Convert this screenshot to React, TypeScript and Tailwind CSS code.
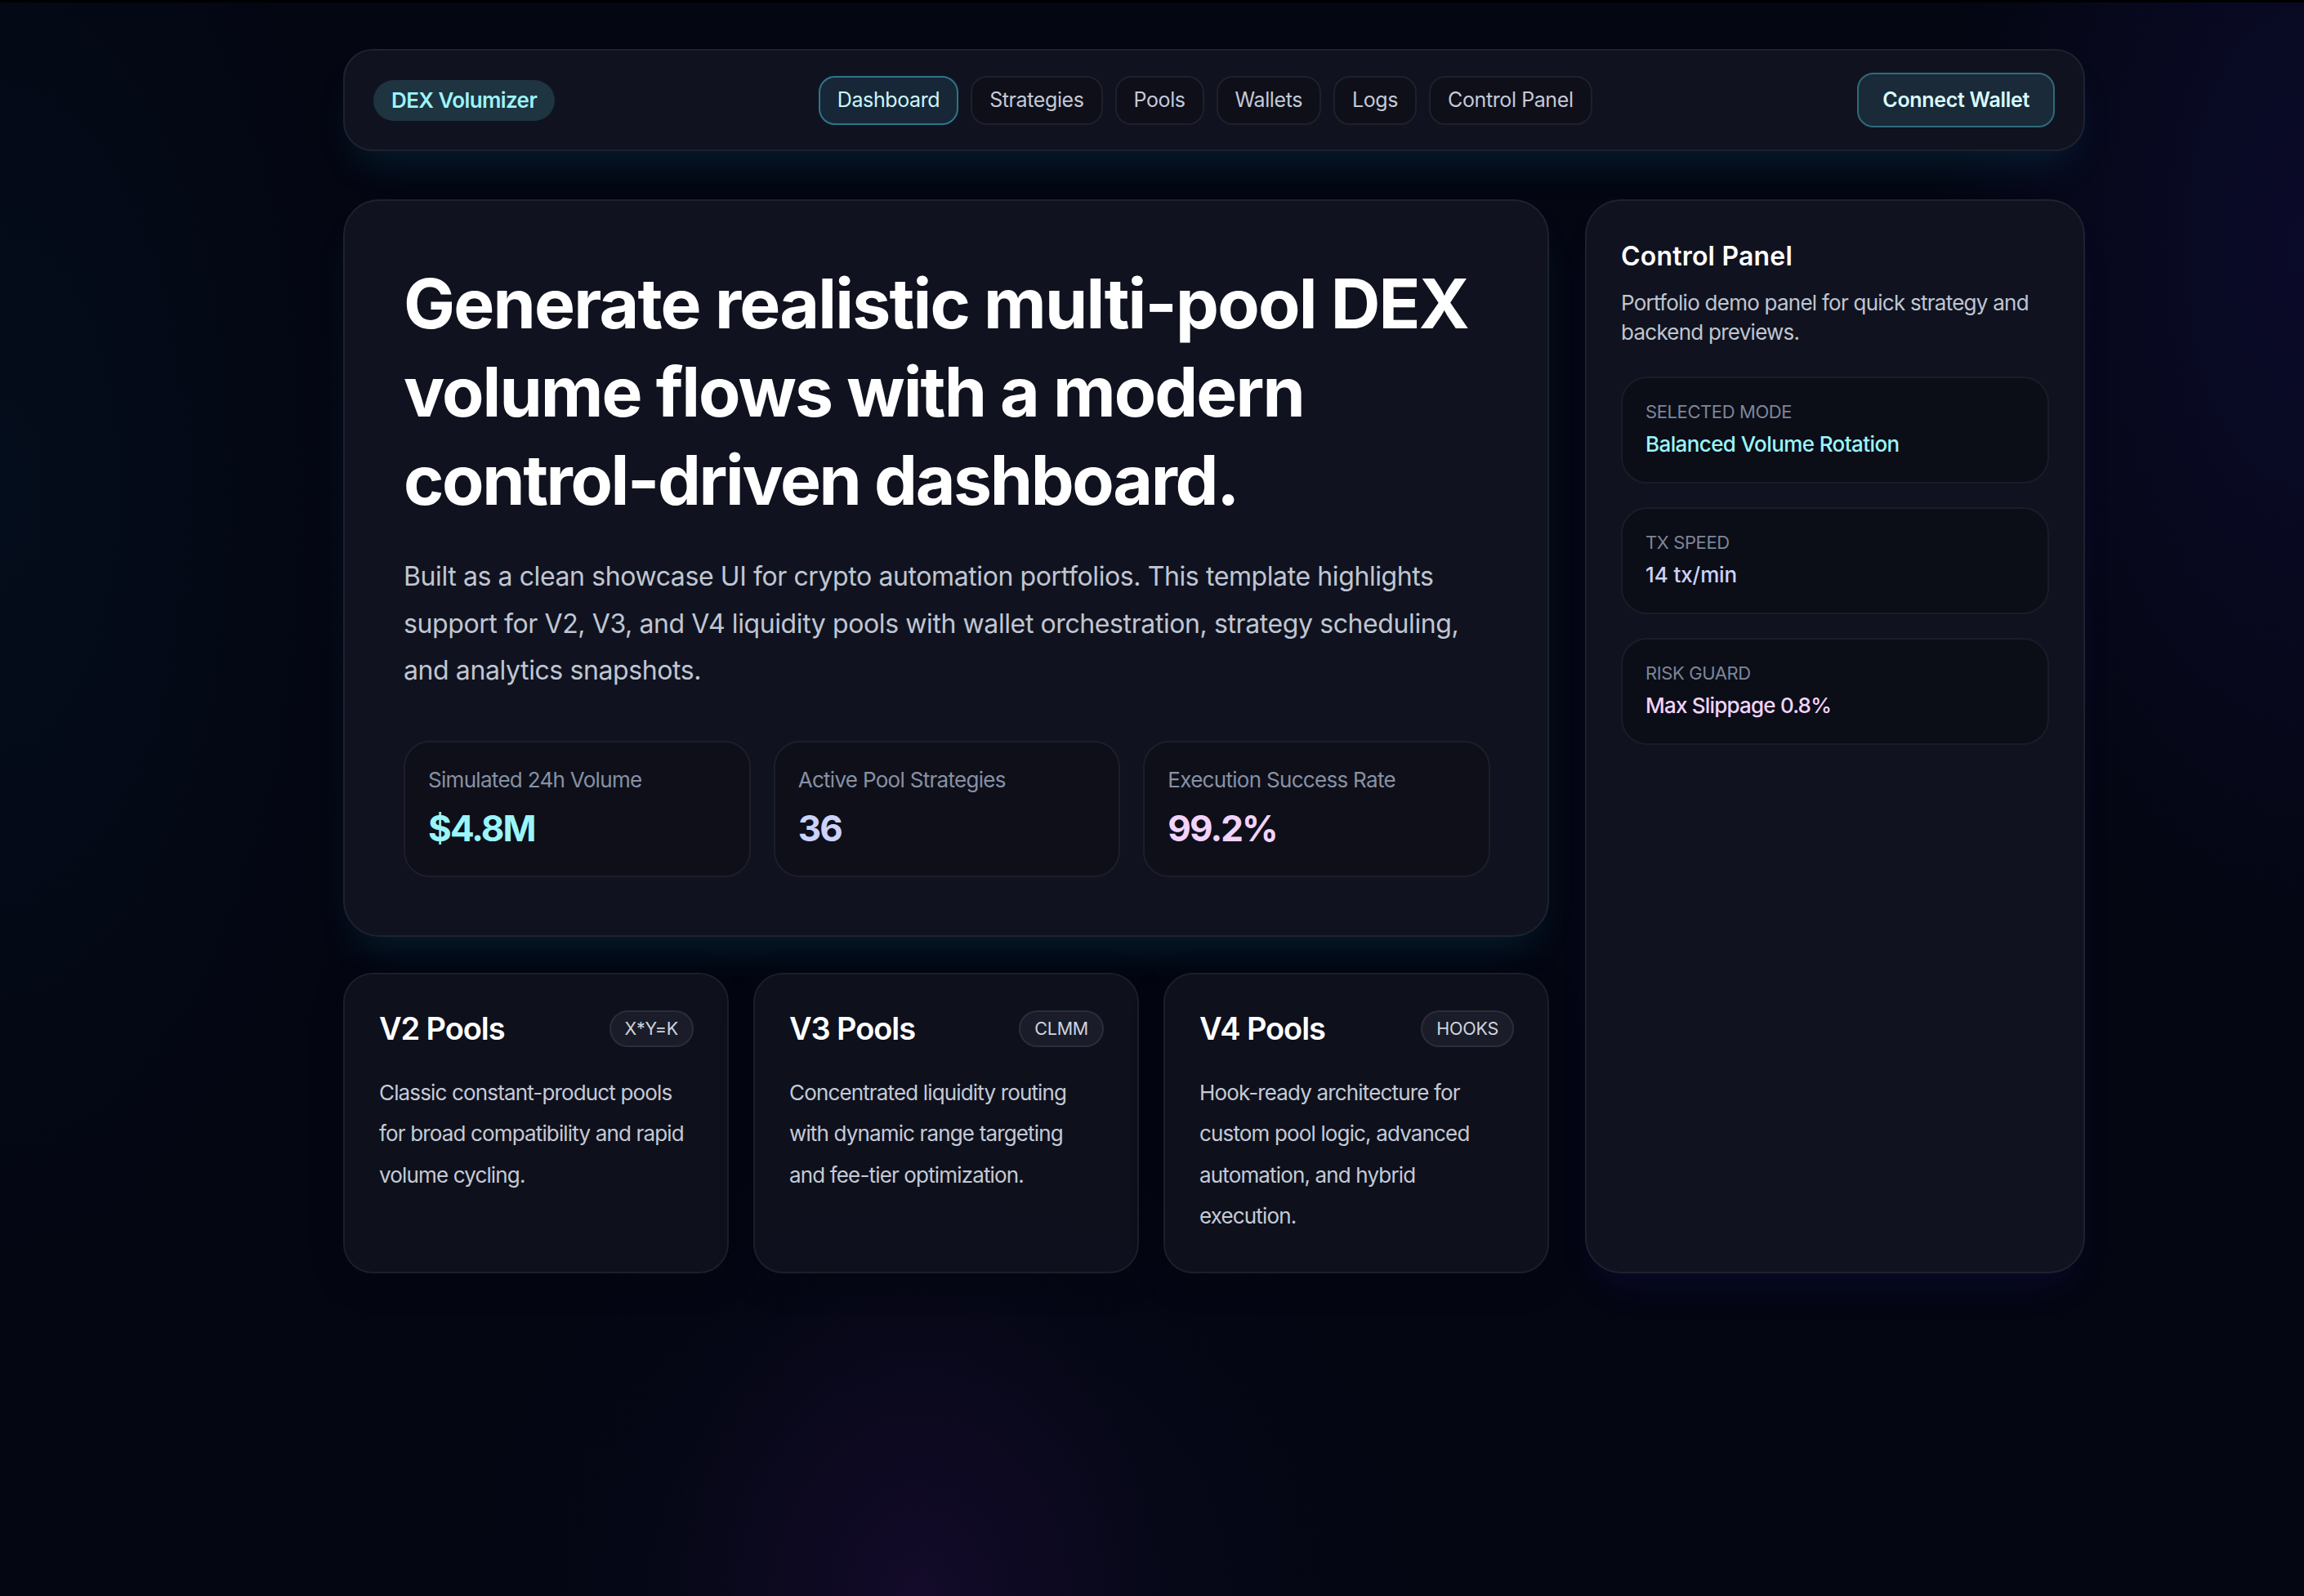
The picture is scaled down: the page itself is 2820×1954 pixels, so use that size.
import React from "react";

const navItems = ["Strategies", "Pools", "Wallets", "Logs", "Control Panel"];

function Stat({ label, value, color }: { label: string; value: string; color: string }) {
  return (
    <div className="rounded-[32px] border-2 border-[#1c1f2a] bg-[#0e0f19] px-[28px] pt-[26px] h-[167px]">
      <div className="text-[26px] leading-[40px] text-[#8791a5] tracking-[-0.7px] whitespace-nowrap">{label}</div>
      <div className={`mt-[9px] text-[44px] leading-[60px] font-bold tracking-[-1.9px] ${color}`}>{value}</div>
    </div>
  );
}

function Pool({ title, badge, lines }: { title: string; badge: string; lines: string[] }) {
  return (
    <div className="rounded-[36px] border-2 border-[#1b1f2a] bg-[#0f121e]/90 pl-[42px] pr-[41px] pt-[44px] h-[368px] shadow-[0_12px_40px_rgba(0,0,0,0.22)]">
      <div className="flex items-center justify-between h-[45px]">
        <div className="text-[38px] font-semibold text-white tracking-[-1.1px]">{title}</div>
        <div className="h-[45px] flex items-center rounded-full border-2 border-[#2b2e3a] bg-[#1a1d29] px-[17px] text-[21.5px] text-[#d0d4df] tracking-[-0.25px]">{badge}</div>
      </div>
      <div className="mt-[31px] text-[26px] leading-[50.4px] text-[#c4cad6] tracking-[-0.85px] whitespace-nowrap">
        {lines.map((l) => (
          <div key={l}>{l}</div>
        ))}
      </div>
    </div>
  );
}

function Mode({ label, value, color }: { label: string; value: string; color: string }) {
  return (
    <div className="rounded-[32px] border-2 border-[#1a1d28] bg-[#0b0d17] px-[28px] pt-[23px] h-[131px]">
      <div className="text-[22px] leading-[36px] uppercase text-[#7d8699] tracking-[-0.4px]">{label}</div>
      <div className={`mt-[2px] text-[26px] leading-[40px] font-medium ${color}`}>{value}</div>
    </div>
  );
}

export default function App() {
  return (
    <div className="h-[1954px] overflow-hidden border-t-[3px] border-black pl-[420px] pt-[57px] w-full [font-family:Inter,sans-serif] bg-[#040612] bg-[radial-gradient(ellipse_400px_560px_at_1120px_1954px,rgba(70,20,100,0.18),transparent_75%),radial-gradient(ellipse_800px_750px_at_1150px_1954px,rgba(40,30,110,0.12),transparent_75%),radial-gradient(ellipse_600px_1200px_at_2820px_300px,rgba(30,25,110,0.26),transparent_75%),radial-gradient(ellipse_600px_1300px_at_0px_600px,rgba(0,60,90,0.13),transparent_75%)]">
      <div className="w-[2132px] h-[125px] flex items-center justify-between rounded-[36px] border-2 border-[#1e2230] bg-[#10131f] pl-[35px] pr-[35px] shadow-[0_28px_50px_-18px_rgba(20,160,200,0.17)]">
        <div className="h-[50px] flex items-center rounded-full bg-[#1e3440] px-[22px] text-[26px] font-semibold text-[#9df3f8] tracking-[-0.6px]">DEX Volumizer</div>
        <nav className="flex gap-[15px] -translate-x-[1px]">
          <div className="h-[60px] flex items-center rounded-[20px] border-2 border-[#2f7488] bg-[#172737] px-[21px] pt-[1px] text-[25px] text-[#cdf6fa] tracking-[-0.4px]">Dashboard</div>
          {navItems.map((n) => (
            <div key={n} className="h-[60px] flex items-center rounded-[20px] border-2 border-[#1e212b] bg-[#0e0f19] px-[21px] pt-[1px] text-[25px] text-[#c4c9d6] tracking-[-0.4px]">{n}</div>
          ))}
        </nav>
        <div className="h-[67px] flex items-center rounded-[20px] border-2 border-[#2f6a7c] bg-[#1a2a38] px-[29px] pt-[1px] text-[25px] font-semibold text-[#d9fbfd] tracking-[-0.3px]">Connect Wallet</div>
      </div>

      <div className="mt-[59px] grid grid-cols-[1476px_612px] gap-x-[44px] w-[2132px]">
        <div className="flex flex-col gap-[44px]">
          <div className="h-[903px] rounded-[44px] border-2 border-[#1e222e] bg-[#10131f] pl-[72px] pr-[70px] pt-[72px] shadow-[0_28px_50px_-18px_rgba(20,160,200,0.16)]">
            <h1 className="text-[84px] leading-[108px] font-bold text-white">
              <span className="tracking-[-1.8px]">Generate realistic multi-pool DEX</span>
              <br />
              <span className="tracking-[-1.9px]">volume flows with a modern</span>
              <br />
              <span className="tracking-[-2.35px]">control-driven dashboard.</span>
            </h1>
            <p className="mt-[35px] text-[32px] leading-[57.6px] text-[#c0c6d3] tracking-[-0.4px]">
              Built as a clean showcase UI for crypto automation portfolios. This template highlights
              <br />
              support for V2, V3, and V4 liquidity pools with wallet orchestration, strategy scheduling,
              <br />
              and analytics snapshots.
            </p>
            <div className="mt-[57px] grid grid-cols-3 gap-[28px]">
              <Stat label="Simulated 24h Volume" value="$4.8M" color="text-[#9af5fa]" />
              <Stat label="Active Pool Strategies" value="36" color="text-[#cbd2fb]" />
              <Stat label="Execution Success Rate" value="99.2%" color="text-[#f2d3fb]" />
            </div>
          </div>
          <div className="grid grid-cols-3 gap-[30px]">
            <Pool title="V2 Pools" badge="X*Y=K" lines={["Classic constant-product pools", "for broad compatibility and rapid", "volume cycling."]} />
            <Pool title="V3 Pools" badge="CLMM" lines={["Concentrated liquidity routing", "with dynamic range targeting", "and fee-tier optimization."]} />
            <Pool title="V4 Pools" badge="HOOKS" lines={["Hook-ready architecture for", "custom pool logic, advanced", "automation, and hybrid", "execution."]} />
          </div>
        </div>

        <div className="rounded-[44px] border-2 border-[#1e222e] bg-[#10131f] px-[42px] pt-[46px] shadow-[0_28px_50px_-18px_rgba(50,40,200,0.14)]">
          <div className="text-[32px] leading-[44px] font-semibold text-white tracking-[0.2px]">Control Panel</div>
          <p className="mt-[17px] text-[26px] leading-[36px] text-[#bfc5d2] tracking-[-0.75px]">
            Portfolio demo panel for quick strategy and
            <br />
            backend previews.
          </p>
          <div className="mt-[36px] flex flex-col gap-[29px]">
            <Mode label="Selected Mode" value="Balanced Volume Rotation" color="text-[#9af5fa] tracking-[-0.6px]" />
            <Mode label="TX Speed" value="14 tx/min" color="text-[#cbd2fb] tracking-[-0.1px]" />
            <Mode label="Risk Guard" value="Max Slippage 0.8%" color="text-[#f2d3fb] tracking-[-0.8px]" />
          </div>
        </div>
      </div>
    </div>
  );
}
